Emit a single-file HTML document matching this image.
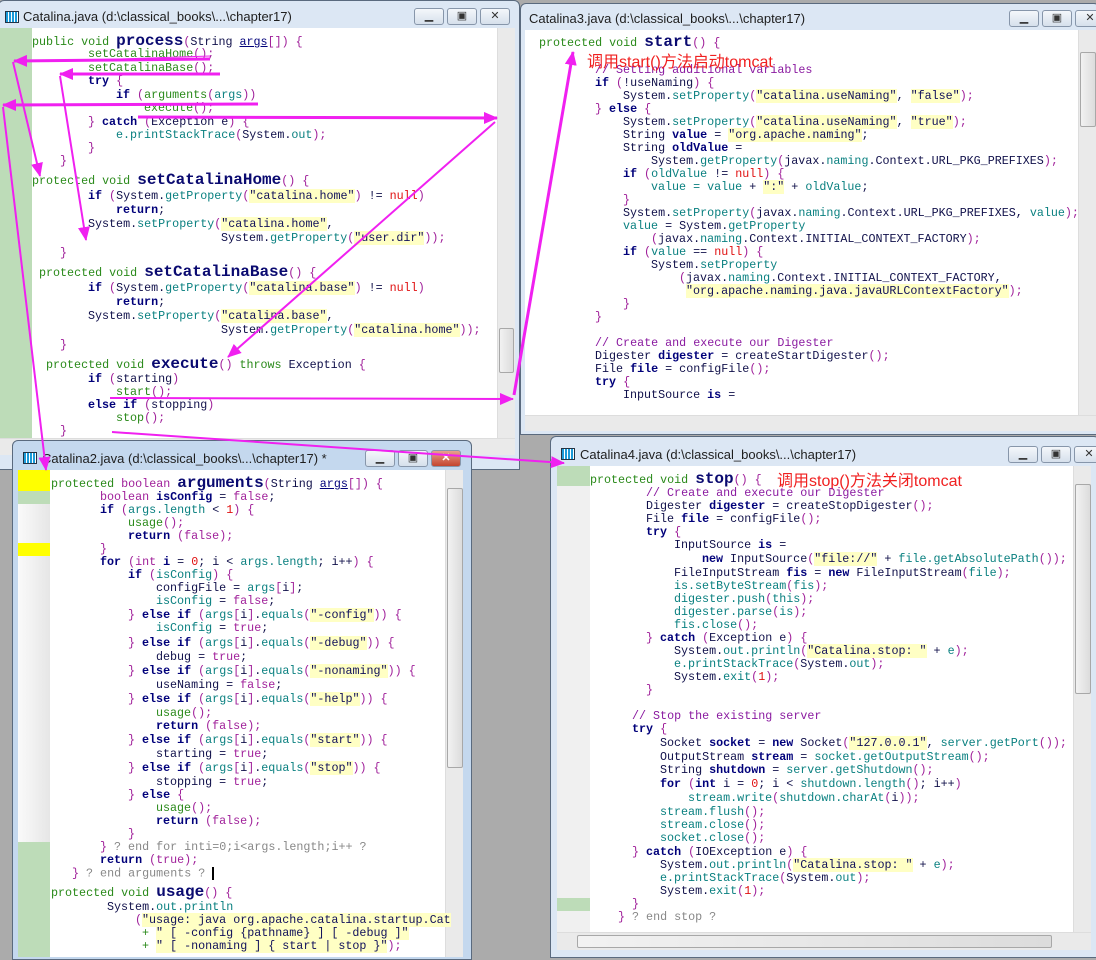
<!DOCTYPE html>
<html><head><meta charset="utf-8">
<style>
*{margin:0;padding:0;box-sizing:border-box}
body{width:1096px;height:957px;background:#ababab;position:relative;overflow:hidden;font-family:"Liberation Mono",monospace}
.win{position:absolute;background:#dce7f4;border:1px solid #5a6a7e;border-radius:6px 6px 0 0}
.tt{position:absolute;font:13px "Liberation Sans",sans-serif;color:#1e1e1e;white-space:nowrap}
.ic{position:absolute;width:14px;height:12px;background:repeating-linear-gradient(90deg,#1a9ad8 0 2px,#fff 2px 3px);border:1px solid #234}
.btn{position:absolute;width:30px;height:17px;border:1px solid #8796aa;border-radius:3px;background:linear-gradient(#f4f7fb,#d6e0ec);font:11px "Liberation Sans",sans-serif;text-align:center;line-height:15px;color:#333}
.btn.x{background:linear-gradient(#e8a08e,#c4452e);color:#fff;font-weight:bold}
.ct{position:absolute;background:#fff;overflow:hidden}
.vs{position:absolute;background:#eaeaea;border-left:1px solid #ddd}
.hs{position:absolute;background:#eaeaea;border-top:1px solid #ddd}
.th{position:absolute;background:linear-gradient(90deg,#f2f2f2,#dcdcdc);border:1px solid #a8a8a8;border-radius:2px}
.l{position:absolute;white-space:pre;font:11.7px/13px "Liberation Mono",monospace;color:#10104a}
.k{color:#00007a;font-weight:bold}
.g{color:#2a8a1a}
.t{color:#0a8080}
.s{background:#ffffc4;color:#10105a}
.p{color:#a0209a}
.n{color:#e01010}
.c{color:#8a1aa0}
.e{color:#888}
.m{font:bold 16px "Liberation Mono",monospace;color:#0a0a70}
.cn{position:absolute;font:16px "Liberation Sans","Noto Sans CJK SC",sans-serif;color:#f02020;white-space:nowrap}
</style></head><body>

<!-- Window 1 -->
<div class="win" style="left:-2px;top:0;width:522px;height:470px">
 <div class="ic" style="left:6px;top:10px"></div>
 <div class="tt" style="left:24px;top:8px">Catalina.java (d:\classical_books\...\chapter17)</div>
 <div class="btn" style="left:415px;top:7px">▁</div><div class="btn" style="left:448px;top:7px">▣</div><div class="btn" style="left:481px;top:7px">✕</div>
</div>
<div class="ct" style="left:0;top:28px;width:497px;height:410px">
 <div style="position:absolute;left:0;top:0;width:32px;height:410px;background:#bddcb8"></div>
</div>
<div class="vs" style="left:497px;top:28px;width:18px;height:410px"><div class="th" style="left:1px;top:300px;width:15px;height:45px"></div></div>
<div class="hs" style="left:0;top:438px;width:515px;height:17px"></div>

<div class="l" style="top:32px;left:32px"><span class="g">public void </span><span class="m">process</span><span class="p">(</span>String <span class="k" style="font-weight:normal;text-decoration:underline">args</span><span class="p">[]) {</span></div>
<div class="l" style="top:48px;left:88px"><span class="g">setCatalinaHome</span><span class="p">();</span></div>
<div class="l" style="top:62px;left:88px"><span class="g">setCatalinaBase</span><span class="p">();</span></div>
<div class="l" style="top:75px;left:88px"><span class="k">try</span> <span class="p">{</span></div>
<div class="l" style="top:89px;left:116px"><span class="k">if</span> <span class="p">(</span><span class="g">arguments</span><span class="p">(</span><span class="t">args</span><span class="p">))</span></div>
<div class="l" style="top:102px;left:144px"><span class="g">execute</span><span class="p">();</span></div>
<div class="l" style="top:116px;left:88px"><span class="p">}</span> <span class="k">catch</span> <span class="p">(</span>Exception e<span class="p">) {</span></div>
<div class="l" style="top:129px;left:116px"><span class="t">e.printStackTrace</span><span class="p">(</span>System.<span class="t">out</span><span class="p">);</span></div>
<div class="l" style="top:142px;left:88px"><span class="p">}</span></div>
<div class="l" style="top:155px;left:60px"><span class="p">}</span></div>
<div class="l" style="top:171px;left:32px"><span class="g">protected void </span><span class="m">setCatalinaHome</span><span class="p">() {</span></div>
<div class="l" style="top:190px;left:88px"><span class="k">if</span> <span class="p">(</span>System.<span class="t">getProperty</span><span class="p">(</span><span class="s">"catalina.home"</span><span class="p">)</span> != <span class="n">null</span><span class="p">)</span></div>
<div class="l" style="top:204px;left:116px"><span class="k">return</span>;</div>
<div class="l" style="top:218px;left:88px">System.<span class="t">setProperty</span><span class="p">(</span><span class="s">"catalina.home"</span>,</div>
<div class="l" style="top:232px;left:221px">System.<span class="t">getProperty</span><span class="p">(</span><span class="s">"user.dir"</span><span class="p">));</span></div>
<div class="l" style="top:247px;left:60px"><span class="p">}</span></div>
<div class="l" style="top:263px;left:39px"><span class="g">protected void </span><span class="m">setCatalinaBase</span><span class="p">() {</span></div>
<div class="l" style="top:282px;left:88px"><span class="k">if</span> <span class="p">(</span>System.<span class="t">getProperty</span><span class="p">(</span><span class="s">"catalina.base"</span><span class="p">)</span> != <span class="n">null</span><span class="p">)</span></div>
<div class="l" style="top:296px;left:116px"><span class="k">return</span>;</div>
<div class="l" style="top:310px;left:88px">System.<span class="t">setProperty</span><span class="p">(</span><span class="s">"catalina.base"</span>,</div>
<div class="l" style="top:324px;left:221px">System.<span class="t">getProperty</span><span class="p">(</span><span class="s">"catalina.home"</span><span class="p">));</span></div>
<div class="l" style="top:339px;left:60px"><span class="p">}</span></div>
<div class="l" style="top:355px;left:46px"><span class="g">protected void </span><span class="m">execute</span><span class="p">()</span> <span class="g">throws</span> Exception <span class="p">{</span></div>
<div class="l" style="top:373px;left:88px"><span class="k">if</span> <span class="p">(</span>starting<span class="p">)</span></div>
<div class="l" style="top:386px;left:116px"><span class="g">start</span><span class="p">();</span></div>
<div class="l" style="top:399px;left:88px"><span class="k">else if</span> <span class="p">(</span>stopping<span class="p">)</span></div>
<div class="l" style="top:412px;left:116px"><span class="g">stop</span><span class="p">();</span></div>
<div class="l" style="top:425px;left:60px"><span class="p">}</span></div>

<!-- Window 3 -->
<div class="win" style="left:520px;top:3px;width:580px;height:432px">
 <div class="tt" style="left:8px;top:7px">Catalina3.java (d:\classical_books\...\chapter17)</div>
 <div class="btn" style="left:488px;top:6px">▁</div><div class="btn" style="left:521px;top:6px">▣</div><div class="btn" style="left:554px;top:6px">✕</div>
</div>
<div class="ct" style="left:525px;top:30px;width:553px;height:385px"></div>
<div class="vs" style="left:1078px;top:30px;width:18px;height:385px"><div class="th" style="left:1px;top:22px;width:16px;height:75px"></div></div>
<div class="hs" style="left:525px;top:415px;width:571px;height:16px"></div>

<div class="l" style="top:33px;left:539px"><span class="g">protected void </span><span class="m">start</span><span class="p">() {</span></div>
<div class="l" style="top:64px;left:595px"><span class="c">// Setting additional variables</span></div>
<div class="cn" style="left:587px;top:48px">调用start()方法启动tomcat</div>
<div class="l" style="top:77px;left:595px"><span class="k">if</span> <span class="p">(</span>!useNaming<span class="p">) {</span></div>
<div class="l" style="top:90px;left:623px">System.<span class="t">setProperty</span><span class="p">(</span><span class="s">"catalina.useNaming"</span>, <span class="s">"false"</span><span class="p">);</span></div>
<div class="l" style="top:103px;left:595px"><span class="p">}</span> <span class="k">else</span> <span class="p">{</span></div>
<div class="l" style="top:116px;left:623px">System.<span class="t">setProperty</span><span class="p">(</span><span class="s">"catalina.useNaming"</span>, <span class="s">"true"</span><span class="p">);</span></div>
<div class="l" style="top:129px;left:623px">String <span class="k">value</span> = <span class="s">"org.apache.naming"</span>;</div>
<div class="l" style="top:142px;left:623px">String <span class="k">oldValue</span> =</div>
<div class="l" style="top:155px;left:651px">System.<span class="t">getProperty</span><span class="p">(</span>javax.<span class="t">naming</span>.Context.URL_PKG_PREFIXES<span class="p">);</span></div>
<div class="l" style="top:168px;left:623px"><span class="k">if</span> <span class="p">(</span><span class="t">oldValue</span> != <span class="n">null</span><span class="p">) {</span></div>
<div class="l" style="top:181px;left:651px"><span class="t">value = value</span> + <span class="s">":"</span> + <span class="t">oldValue</span>;</div>
<div class="l" style="top:194px;left:623px"><span class="p">}</span></div>
<div class="l" style="top:207px;left:623px">System.<span class="t">setProperty</span><span class="p">(</span>javax.<span class="t">naming</span>.Context.URL_PKG_PREFIXES, <span class="t">value</span><span class="p">);</span></div>
<div class="l" style="top:220px;left:623px"><span class="t">value</span> = System.<span class="t">getProperty</span></div>
<div class="l" style="top:233px;left:651px"><span class="p">(</span>javax.<span class="t">naming</span>.Context.INITIAL_CONTEXT_FACTORY<span class="p">);</span></div>
<div class="l" style="top:246px;left:623px"><span class="k">if</span> <span class="p">(</span><span class="t">value</span> == <span class="n">null</span><span class="p">) {</span></div>
<div class="l" style="top:259px;left:651px">System.<span class="t">setProperty</span></div>
<div class="l" style="top:272px;left:679px"><span class="p">(</span>javax.<span class="t">naming</span>.Context.INITIAL_CONTEXT_FACTORY,</div>
<div class="l" style="top:285px;left:686px"><span class="s">"org.apache.naming.java.javaURLContextFactory"</span><span class="p">);</span></div>
<div class="l" style="top:298px;left:623px"><span class="p">}</span></div>
<div class="l" style="top:311px;left:595px"><span class="p">}</span></div>
<div class="l" style="top:337px;left:595px"><span class="c">// Create and execute our Digester</span></div>
<div class="l" style="top:350px;left:595px">Digester <span class="k">digester</span> = createStartDigester<span class="p">();</span></div>
<div class="l" style="top:363px;left:595px">File <span class="k">file</span> = configFile<span class="p">();</span></div>
<div class="l" style="top:376px;left:595px"><span class="k">try</span> <span class="p">{</span></div>
<div class="l" style="top:389px;left:623px">InputSource <span class="k">is</span> =</div>

<!-- Window 4 -->
<div class="win" style="left:550px;top:436px;width:550px;height:522px">
 <div class="ic" style="left:10px;top:11px"></div>
 <div class="tt" style="left:29px;top:10px">Catalina4.java (d:\classical_books\...\chapter17)</div>
 <div class="btn" style="left:457px;top:9px">▁</div><div class="btn" style="left:490px;top:9px">▣</div><div class="btn" style="left:523px;top:9px">✕</div>
</div>
<div class="ct" style="left:557px;top:466px;width:516px;height:466px">
 <div style="position:absolute;left:0;top:0;width:33px;height:466px;background:#f0f0f0"></div>
 <div style="position:absolute;left:0;top:0;width:33px;height:20px;background:#bddcb8"></div>
 <div style="position:absolute;left:0;top:432px;width:33px;height:13px;background:#bddcb8"></div>
</div>
<div class="vs" style="left:1073px;top:466px;width:18px;height:466px"><div class="th" style="left:1px;top:18px;width:16px;height:210px"></div></div>
<div class="hs" style="left:557px;top:932px;width:534px;height:18px"><div class="th" style="left:20px;top:2px;width:475px;height:13px"></div></div>

<div class="l" style="top:470px;left:590px"><span class="g">protected void </span><span class="m">stop</span><span class="p">() {</span></div>
<div class="cn" style="left:777px;top:467px">调用stop()方法关闭tomcat</div>
<div class="l" style="top:487px;left:646px"><span class="c">// Create and execute our Digester</span></div>
<div class="l" style="top:500px;left:646px">Digester <span class="k">digester</span> = createStopDigester<span class="p">();</span></div>
<div class="l" style="top:513px;left:646px">File <span class="k">file</span> = configFile<span class="p">();</span></div>
<div class="l" style="top:526px;left:646px"><span class="k">try</span> <span class="p">{</span></div>
<div class="l" style="top:539px;left:674px">InputSource <span class="k">is</span> =</div>
<div class="l" style="top:553px;left:702px"><span class="k">new</span> InputSource<span class="p">(</span><span class="s">"file://"</span> + <span class="t">file.getAbsolutePath</span><span class="p">());</span></div>
<div class="l" style="top:567px;left:674px">FileInputStream <span class="k">fis</span> = <span class="k">new</span> FileInputStream<span class="p">(</span><span class="t">file</span><span class="p">);</span></div>
<div class="l" style="top:580px;left:674px"><span class="t">is.setByteStream</span><span class="p">(</span><span class="t">fis</span><span class="p">);</span></div>
<div class="l" style="top:593px;left:674px"><span class="t">digester.push</span><span class="p">(</span><span class="t">this</span><span class="p">);</span></div>
<div class="l" style="top:606px;left:674px"><span class="t">digester.parse</span><span class="p">(</span><span class="t">is</span><span class="p">);</span></div>
<div class="l" style="top:619px;left:674px"><span class="t">fis.close</span><span class="p">();</span></div>
<div class="l" style="top:632px;left:646px"><span class="p">}</span> <span class="k">catch</span> <span class="p">(</span>Exception e<span class="p">) {</span></div>
<div class="l" style="top:645px;left:674px">System.<span class="t">out.println</span><span class="p">(</span><span class="s">"Catalina.stop: "</span> + <span class="t">e</span><span class="p">);</span></div>
<div class="l" style="top:658px;left:674px"><span class="t">e.printStackTrace</span><span class="p">(</span>System.<span class="t">out</span><span class="p">);</span></div>
<div class="l" style="top:671px;left:674px">System.<span class="t">exit</span><span class="p">(</span><span class="n">1</span><span class="p">);</span></div>
<div class="l" style="top:684px;left:646px"><span class="p">}</span></div>
<div class="l" style="top:710px;left:632px"><span class="c">// Stop the existing server</span></div>
<div class="l" style="top:723px;left:632px"><span class="k">try</span> <span class="p">{</span></div>
<div class="l" style="top:737px;left:660px">Socket <span class="k">socket</span> = <span class="k">new</span> Socket<span class="p">(</span><span class="s">"127.0.0.1"</span>, <span class="t">server.getPort</span><span class="p">());</span></div>
<div class="l" style="top:751px;left:660px">OutputStream <span class="k">stream</span> = <span class="t">socket.getOutputStream</span><span class="p">();</span></div>
<div class="l" style="top:764px;left:660px">String <span class="k">shutdown</span> = <span class="t">server.getShutdown</span><span class="p">();</span></div>
<div class="l" style="top:778px;left:660px"><span class="k">for</span> <span class="p">(</span><span class="k">int</span> i = <span class="n">0</span>; i &lt; <span class="t">shutdown.length</span><span class="p">()</span>; i++<span class="p">)</span></div>
<div class="l" style="top:792px;left:688px"><span class="t">stream.write</span><span class="p">(</span><span class="t">shutdown.charAt</span><span class="p">(</span>i<span class="p">));</span></div>
<div class="l" style="top:806px;left:660px"><span class="t">stream.flush</span><span class="p">();</span></div>
<div class="l" style="top:819px;left:660px"><span class="t">stream.close</span><span class="p">();</span></div>
<div class="l" style="top:832px;left:660px"><span class="t">socket.close</span><span class="p">();</span></div>
<div class="l" style="top:846px;left:632px"><span class="p">}</span> <span class="k">catch</span> <span class="p">(</span>IOException e<span class="p">) {</span></div>
<div class="l" style="top:859px;left:660px">System.<span class="t">out.println</span><span class="p">(</span><span class="s">"Catalina.stop: "</span> + <span class="t">e</span><span class="p">);</span></div>
<div class="l" style="top:872px;left:660px"><span class="t">e.printStackTrace</span><span class="p">(</span>System.<span class="t">out</span><span class="p">);</span></div>
<div class="l" style="top:885px;left:660px">System.<span class="t">exit</span><span class="p">(</span><span class="n">1</span><span class="p">);</span></div>
<div class="l" style="top:898px;left:632px"><span class="p">}</span></div>
<div class="l" style="top:911px;left:618px"><span class="p">}</span> <span class="e">? end stop ?</span></div>

<!-- Window 2 -->
<div class="win" style="left:12px;top:440px;width:460px;height:520px;background:#c4d8ee">
 <div class="ic" style="left:10px;top:11px"></div>
 <div class="tt" style="left:29px;top:10px">Catalina2.java (d:\classical_books\...\chapter17) *</div>
 <div class="btn" style="left:352px;top:9px">▁</div><div class="btn" style="left:385px;top:9px">▣</div><div class="btn x" style="left:418px;top:9px">✕</div>
</div>
<div class="ct" style="left:18px;top:470px;width:427px;height:487px">
 <div style="position:absolute;left:0;top:0;width:32px;height:487px;background:linear-gradient(90deg,#fafafa,#e6e6e6)"></div>
 <div style="position:absolute;left:0;top:0;width:32px;height:21px;background:#ffff00"></div>
 <div style="position:absolute;left:0;top:21px;width:32px;height:13px;background:#bddcb8"></div>
 <div style="position:absolute;left:0;top:73px;width:32px;height:13px;background:#ffff00"></div>
 <div style="position:absolute;left:0;top:372px;width:32px;height:115px;background:#bddcb8"></div>
</div>
<div class="vs" style="left:445px;top:470px;width:18px;height:487px"><div class="th" style="left:1px;top:18px;width:16px;height:280px"></div></div>

<div class="l" style="top:474px;left:51px"><span class="g">protected </span><span class="p">boolean </span><span class="m">arguments</span><span class="p">(</span>String <span class="k" style="font-weight:normal;text-decoration:underline">args</span><span class="p">[]) {</span></div>
<div class="l" style="top:491px;left:100px"><span class="p">boolean</span> <span class="k">isConfig</span> = <span class="p">false</span>;</div>
<div class="l" style="top:504px;left:100px"><span class="k">if</span> <span class="p">(</span><span class="t">args.length</span> &lt; <span class="n">1</span><span class="p">) {</span></div>
<div class="l" style="top:517px;left:128px"><span class="g">usage</span><span class="p">();</span></div>
<div class="l" style="top:530px;left:128px"><span class="k">return</span> <span class="p">(false);</span></div>
<div class="l" style="top:543px;left:100px"><span class="p">}</span></div>
<div class="l" style="top:556px;left:100px"><span class="k">for</span> <span class="p">(int</span> <span class="k">i</span> = <span class="n">0</span>; i &lt; <span class="t">args.length</span>; i++<span class="p">) {</span></div>
<div class="l" style="top:569px;left:128px"><span class="k">if</span> <span class="p">(</span><span class="t">isConfig</span><span class="p">) {</span></div>
<div class="l" style="top:582px;left:156px">configFile = <span class="t">args</span><span class="p">[</span>i<span class="p">]</span>;</div>
<div class="l" style="top:595px;left:156px"><span class="t">isConfig</span> = <span class="p">false</span>;</div>
<div class="l" style="top:609px;left:128px"><span class="p">}</span> <span class="k">else if</span> <span class="p">(</span><span class="t">args</span><span class="p">[</span>i<span class="p">]</span>.<span class="t">equals</span><span class="p">(</span><span class="s">"-config"</span><span class="p">)) {</span></div>
<div class="l" style="top:622px;left:156px"><span class="t">isConfig</span> = <span class="p">true</span>;</div>
<div class="l" style="top:637px;left:128px"><span class="p">}</span> <span class="k">else if</span> <span class="p">(</span><span class="t">args</span><span class="p">[</span>i<span class="p">]</span>.<span class="t">equals</span><span class="p">(</span><span class="s">"-debug"</span><span class="p">)) {</span></div>
<div class="l" style="top:651px;left:156px">debug = <span class="p">true</span>;</div>
<div class="l" style="top:665px;left:128px"><span class="p">}</span> <span class="k">else if</span> <span class="p">(</span><span class="t">args</span><span class="p">[</span>i<span class="p">]</span>.<span class="t">equals</span><span class="p">(</span><span class="s">"-nonaming"</span><span class="p">)) {</span></div>
<div class="l" style="top:679px;left:156px">useNaming = <span class="p">false</span>;</div>
<div class="l" style="top:693px;left:128px"><span class="p">}</span> <span class="k">else if</span> <span class="p">(</span><span class="t">args</span><span class="p">[</span>i<span class="p">]</span>.<span class="t">equals</span><span class="p">(</span><span class="s">"-help"</span><span class="p">)) {</span></div>
<div class="l" style="top:707px;left:156px"><span class="g">usage</span><span class="p">();</span></div>
<div class="l" style="top:720px;left:156px"><span class="k">return</span> <span class="p">(false);</span></div>
<div class="l" style="top:734px;left:128px"><span class="p">}</span> <span class="k">else if</span> <span class="p">(</span><span class="t">args</span><span class="p">[</span>i<span class="p">]</span>.<span class="t">equals</span><span class="p">(</span><span class="s">"start"</span><span class="p">)) {</span></div>
<div class="l" style="top:748px;left:156px">starting = <span class="p">true</span>;</div>
<div class="l" style="top:762px;left:128px"><span class="p">}</span> <span class="k">else if</span> <span class="p">(</span><span class="t">args</span><span class="p">[</span>i<span class="p">]</span>.<span class="t">equals</span><span class="p">(</span><span class="s">"stop"</span><span class="p">)) {</span></div>
<div class="l" style="top:776px;left:156px">stopping = <span class="p">true</span>;</div>
<div class="l" style="top:789px;left:128px"><span class="p">}</span> <span class="k">else</span> <span class="p">{</span></div>
<div class="l" style="top:802px;left:156px"><span class="g">usage</span><span class="p">();</span></div>
<div class="l" style="top:815px;left:156px"><span class="k">return</span> <span class="p">(false);</span></div>
<div class="l" style="top:828px;left:128px"><span class="p">}</span></div>
<div class="l" style="top:841px;left:100px"><span class="p">}</span> <span class="e">? end for inti=0;i&lt;args.length;i++ ?</span></div>
<div class="l" style="top:854px;left:100px"><span class="k">return</span> <span class="p">(true);</span></div>
<div class="l" style="top:867px;left:72px"><span class="p">}</span> <span class="e">? end arguments ?</span> <span style="display:inline-block;width:2px;height:13px;background:#000;vertical-align:middle"></span></div>
<div class="l" style="top:883px;left:51px"><span class="g">protected void </span><span class="m">usage</span><span class="p">() {</span></div>
<div class="l" style="top:901px;left:107px">System.<span class="t">out.println</span></div>
<div class="l" style="top:914px;left:135px"><span class="p">(</span><span class="s">"usage: java org.apache.catalina.startup.Cat</span></div>
<div class="l" style="top:927px;left:142px"><span class="g">+</span> <span class="s">" [ -config {pathname} ] [ -debug ]"</span></div>
<div class="l" style="top:940px;left:142px"><span class="g">+</span> <span class="s">" [ -nonaming ] { start | stop }"</span><span class="p">);</span></div>

<!-- arrows -->
<svg width="1096" height="957" style="position:absolute;left:0;top:0" xmlns="http://www.w3.org/2000/svg">
<defs>
<marker id="b" markerWidth="14" markerHeight="12" refX="13" refY="6" orient="auto" markerUnits="userSpaceOnUse"><path d="M0,0 L14,6 L0,12 Z" fill="#f020f0"/></marker></defs>
<g stroke="#f020f0" fill="none">
<line x1="210" y1="59" x2="14" y2="61" stroke-width="3" marker-end="url(#b)"/>
<line x1="88" y1="60" x2="210" y2="56" stroke-width="1"/>
<line x1="13" y1="62" x2="40" y2="176" stroke-width="2" marker-end="url(#b)"/>
<line x1="220" y1="74" x2="60" y2="74" stroke-width="3" marker-end="url(#b)"/>
<line x1="60" y1="76" x2="86" y2="240" stroke-width="2" marker-end="url(#b)"/>
<line x1="258" y1="104" x2="3" y2="105" stroke-width="3" marker-end="url(#b)"/>
<line x1="116" y1="104" x2="258" y2="104" stroke-width="1"/>
<line x1="3" y1="107" x2="46" y2="470" stroke-width="2" marker-end="url(#b)"/>
<line x1="138" y1="117" x2="497" y2="118" stroke-width="3" marker-end="url(#b)"/>
<line x1="495" y1="122" x2="228" y2="357" stroke-width="2" marker-end="url(#b)"/>
<line x1="110" y1="398" x2="513" y2="399" stroke-width="2" marker-end="url(#b)"/>
<line x1="514" y1="395" x2="573" y2="52" stroke-width="3" marker-end="url(#b)"/>
<line x1="112" y1="432" x2="564" y2="463" stroke-width="2" marker-end="url(#b)"/>
</g>
</svg>
</body></html>
